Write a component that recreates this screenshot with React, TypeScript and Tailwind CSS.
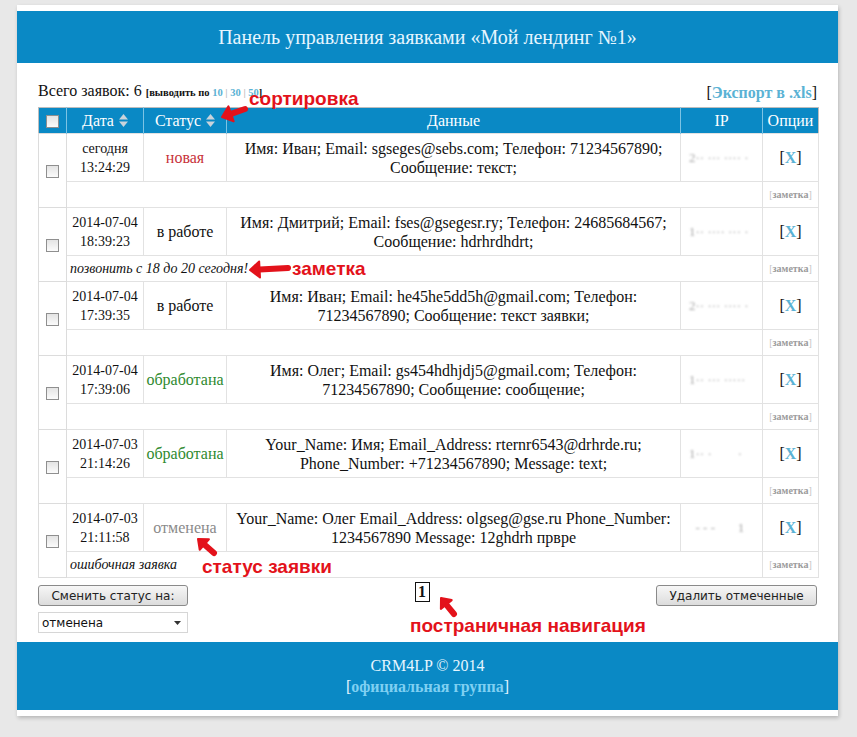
import React from "react";

type Lead = {
  date: string;
  time: string;
  status: "новая" | "в работе" | "обработана" | "отменена";
  data: string;
  ip: string;
  note: string;
};

const leads: Lead[] = [
  {
    date: "сегодня",
    time: "13:24:29",
    status: "новая",
    data: "Имя: Иван; Email: sgseges@sebs.com; Телефон: 71234567890; Сообщение: текст;",
    ip: "2·· ··· ···· ·",
    note: "",
  },
  {
    date: "2014-07-04",
    time: "18:39:23",
    status: "в работе",
    data: "Имя: Дмитрий; Email: fses@gsegesr.ry; Телефон: 24685684567; Сообщение: hdrhrdhdrt;",
    ip: "1·· ···· ··· ·",
    note: "позвонить с 18 до 20 сегодня!",
  },
  {
    date: "2014-07-04",
    time: "17:39:35",
    status: "в работе",
    data: "Имя: Иван; Email: he45he5dd5h@gmail.com; Телефон: 71234567890; Сообщение: текст заявки;",
    ip: "2·· ··· ···· ·",
    note: "",
  },
  {
    date: "2014-07-04",
    time: "17:39:06",
    status: "обработана",
    data: "Имя: Олег; Email: gs454hdhjdj5@gmail.com; Телефон: 71234567890; Сообщение: сообщение;",
    ip: "1·· ··· ·····",
    note: "",
  },
  {
    date: "2014-07-03",
    time: "21:14:26",
    status: "обработана",
    data: "Your_Name: Имя; Email_Address: rternr6543@drhrde.ru; Phone_Number: +71234567890; Message: text;",
    ip: "1·· ·        ·",
    note: "",
  },
  {
    date: "2014-07-03",
    time: "21:11:58",
    status: "отменена",
    data: "Your_Name: Олег Email_Address: olgseg@gse.ru Phone_Number: 1234567890 Message: 12ghdrh првре",
    ip: "  - - -       1",
    note: "ошибочная заявка",
  },
];

const statusColor: Record<Lead["status"], string> = {
  новая: "text-[#c8323a]",
  "в работе": "text-[#111]",
  обработана: "text-[#2f8a2f]",
  отменена: "text-[#8a8a8a]",
};

function Checkbox() {
  return (
    <span className="inline-block h-[13px] w-[13px] border border-[#8f8f8f] bg-[linear-gradient(180deg,#e4e4e4_0%,#fbfbfb_100%)] align-middle" />
  );
}

function SortIcon() {
  return (
    <svg width="9" height="13" viewBox="0 0 9 13" className="ml-[5px] inline-block align-[-1px]">
      <path d="M4.5 0 L9 5.5 L0 5.5 Z" fill="#c9d3db" />
      <path d="M4.5 13 L9 7.5 L0 7.5 Z" fill="#c9d3db" />
    </svg>
  );
}

type Pt = [number, number];

function Arrow({ from, to, width = 6, head = 9 }: { from: Pt; to: Pt; width?: number; head?: number }) {
  const dx = to[0] - from[0];
  const dy = to[1] - from[1];
  const len = Math.hypot(dx, dy);
  const ux = dx / len;
  const uy = dy / len;
  const nx = -uy;
  const ny = ux;
  const bx = to[0] - ux * head * 1.2;
  const by = to[1] - uy * head * 1.2;
  return (
    <g>
      <line x1={from[0]} y1={from[1]} x2={bx} y2={by} stroke="#e3121b" strokeWidth={width} strokeLinecap="round" />
      <polygon
        points={`${to[0]},${to[1]} ${bx + nx * head},${by + ny * head} ${bx - nx * head},${by - ny * head}`}
        fill="#e3121b"
        stroke="#e3121b"
        strokeWidth={2}
        strokeLinejoin="round"
      />
    </g>
  );
}

function Annotations() {
  const label =
    "pointer-events-none absolute font-['Liberation_Sans',Arial,sans-serif] text-[19px] font-bold leading-[22px] text-[#e3121b]";
  return (
    <>
      <svg className="pointer-events-none absolute left-0 top-0" width="857" height="737">
        <Arrow from={[245, 109]} to={[222, 117]} width={6} head={8} />
        <Arrow from={[288, 268]} to={[250, 270]} width={6} head={8} />
        <Arrow from={[214, 553]} to={[198, 539]} width={6} head={7} />
        <Arrow from={[454, 614]} to={[441, 598]} width={6} head={7} />
      </svg>
      <span className={`${label} left-[249px] top-[88px]`}>сортировка</span>
      <span className={`${label} left-[292px] top-[258px]`}>заметка</span>
      <span className={`${label} left-[202px] top-[556px]`}>статус заявки</span>
      <span className={`${label} left-[410px] top-[615px]`}>постраничная навигация</span>
    </>
  );
}

function LeadRows({ lead }: { lead: Lead }) {
  return (
    <>
      <tr className="h-[48px]">
        <td rowSpan={2} className="border border-[#dcdcdc] text-center align-middle">
          <Checkbox />
        </td>
        <td className="border border-[#e2e2e2] px-[1px] text-center align-middle text-[14px] leading-[19px]">
          {lead.date}
          <br />
          {lead.time}
        </td>
        <td className={`border border-[#e2e2e2] px-[1px] text-center align-middle ${statusColor[lead.status]}`}>
          {lead.status}
        </td>
        <td className="border border-[#e2e2e2] px-[8px] text-center align-middle leading-[19px]">{lead.data}</td>
        <td className="overflow-hidden whitespace-pre border border-[#e2e2e2] px-[8px] text-left align-middle text-[13px] text-[#a8a8a8] blur-[0.8px]">
          {lead.ip}
        </td>
        <td className="border border-[#e2e2e2] text-center align-middle">
          [<a className="font-bold text-[#5ab2d4]">X</a>]
        </td>
      </tr>
      <tr className="h-[26px]">
        <td colSpan={4} className="border border-[#e2e2e2] px-[3px] align-middle text-[14px] italic leading-[16px]">
          {lead.note}
        </td>
        <td className="border border-[#e2e2e2] text-center align-middle text-[10px] font-bold text-[#9b9b9b]">
          <span className="font-normal text-[#c4c4c4]">[</span>заметка<span className="font-normal text-[#c4c4c4]">]</span>
        </td>
      </tr>
    </>
  );
}

export default function App() {
  return (
    <div className="relative min-h-[737px] bg-[#e8e8e8] pt-[5px] font-['Liberation_Serif','Times_New_Roman',serif] text-[16px] text-[#111]">
      <div className="ml-[17px] w-[821px] bg-white py-[6px] shadow-[1px_2px_4px_rgba(0,0,0,0.22)]">
        <header className="flex h-[52px] items-center justify-center bg-[#0a89c5] text-[20px] text-[#e6f6ff]">
          Панель управления заявками «Мой лендинг №1»
        </header>

        <div className="px-[21px]">
          <div className="flex h-[44px] items-end justify-between pb-[5px] leading-[18px]">
            <div>
              Всего заявок: 6{" "}
              <span className="text-[10.5px] font-bold">
                [выводить по <a className="text-[#5ab2d4]">10</a> <span className="text-[#bbb]">|</span>{" "}
                <a className="text-[#5ab2d4]">30</a> <span className="text-[#bbb]">|</span>{" "}
                <a className="text-[#5ab2d4]">50</a>]
              </span>
            </div>
            <div>
              [<a className="font-bold text-[#5ab2d4]">Экспорт в .xls</a>]
            </div>
          </div>

          <table className="w-[780px] table-fixed border-collapse border border-[#bdbdbd]">
            <colgroup>
              <col className="w-[28px]" />
              <col className="w-[77px]" />
              <col className="w-[83px]" />
              <col className="w-[454px]" />
              <col className="w-[82px]" />
              <col className="w-[56px]" />
            </colgroup>
            <thead>
              <tr className="h-[26px] bg-[#0a89c5] text-white">
                <th className="border-r border-[#7cc3e4] text-center font-normal">
                  <Checkbox />
                </th>
                <th className="border-r border-[#7cc3e4] text-center font-normal">
                  Дата
                  <SortIcon />
                </th>
                <th className="border-r border-[#7cc3e4] text-center font-normal">
                  Статус
                  <SortIcon />
                </th>
                <th className="border-r border-[#7cc3e4] text-center font-normal">Данные</th>
                <th className="border-r border-[#7cc3e4] text-center font-normal">IP</th>
                <th className="text-center font-normal">Опции</th>
              </tr>
            </thead>
            <tbody>
              {leads.map((lead, i) => (
                <LeadRows key={i} lead={lead} />
              ))}
            </tbody>
          </table>

          <div className="flex h-[64px] items-start justify-between pt-[4px]">
            <div className="flex w-[150px] flex-col gap-[6px] pt-[3px] font-['DejaVu_Sans',Tahoma,sans-serif] text-[12px]">
              <button className="h-[21px] rounded-[3px] border border-[#8a8a8a] bg-[linear-gradient(180deg,#f7f7f7_0%,#dcdcdc_100%)] text-[#222]">
                Сменить статус на:
              </button>
              <div className="flex h-[21px] items-center justify-between border border-[#d6d6d6] bg-white pl-[3px] pr-[6px] text-[#111]">
                <span>отменена</span>
                <svg width="7" height="4" viewBox="0 0 7 4">
                  <path d="M0 0 H7 L3.5 4 Z" fill="#333" />
                </svg>
              </div>
            </div>
            <div className="flex h-[20px] w-[15px] items-center justify-center border border-[#111] text-[16px] font-bold leading-none">
              1
            </div>
            <div className="pt-[3px] font-['DejaVu_Sans',Tahoma,sans-serif] text-[12px]">
              <button className="h-[21px] w-[161px] rounded-[3px] border border-[#8a8a8a] bg-[linear-gradient(180deg,#f7f7f7_0%,#dcdcdc_100%)] text-[#222]">
                Удалить отмеченные
              </button>
            </div>
          </div>
        </div>

        <footer className="flex h-[68px] flex-col items-center justify-center gap-[3px] bg-[#0a89c5] leading-[18px] text-[#e6f6ff]">
          <div>CRM4LP © 2014</div>
          <div>
            [<a className="font-bold text-[#7fd0f2]">официальная группа</a>]
          </div>
        </footer>
      </div>
      <Annotations />
    </div>
  );
}
